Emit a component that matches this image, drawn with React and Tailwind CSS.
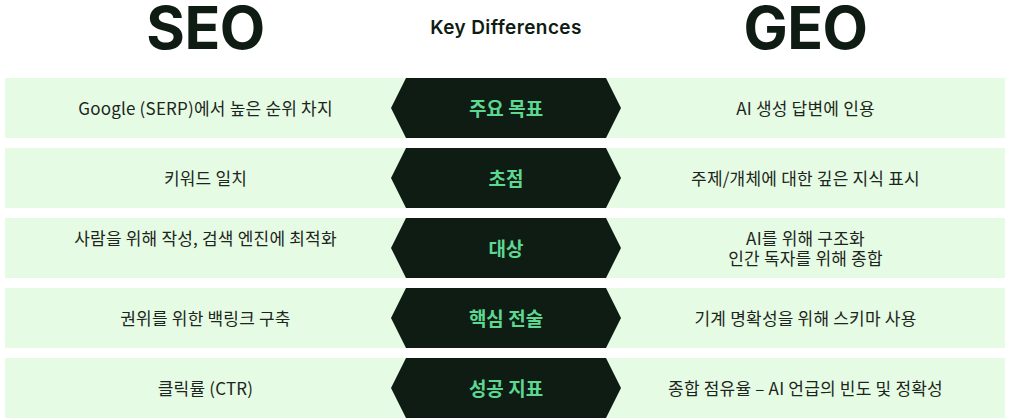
import React from "react";

const rows = [
  { seo: ["Google (SERP)에서 높은 순위 차지"], key: "주요 목표", geo: ["AI 생성 답변에 인용"] },
  { seo: ["키워드 일치"], key: "초점", geo: ["주제/개체에 대한 깊은 지식 표시"] },
  { seo: ["사람을 위해 작성, 검색 엔진에 최적화", "\u00a0"], key: "대상", geo: ["AI를 위해 구조화", "인간 독자를 위해 종합"] },
  { seo: ["권위를 위한 백링크 구축"], key: "핵심 전술", geo: ["기계 명확성을 위해 스키마 사용"] },
  { seo: ["클릭률 (CTR)"], key: "성공 지표", geo: ["종합 점유율 – AI 언급의 빈도 및 정확성"] },
];

export default function App() {
  return (
    <div className="w-[1009px] h-[419px] bg-white pl-[5px] pr-[4px] overflow-hidden">
      <div className="flex h-[78px] text-[#0f1c14]">
        <div className="w-[401px] flex justify-center pt-[2px]">
          <div className="text-[59px] leading-[60px] font-bold tracking-[-0.5px] -mt-[4px] [font-family:Inter,'Liberation_Sans',sans-serif]">SEO</div>
        </div>
        <div className="w-[200px] flex justify-center">
          <div className="text-[19px] leading-[22px] font-semibold mt-[17px] tracking-[0.4px] whitespace-nowrap [font-family:Inter,'Liberation_Sans',sans-serif]">Key Differences</div>
        </div>
        <div className="flex-1 flex justify-center pt-[2px]">
          <div className="text-[59px] leading-[60px] font-bold tracking-[-0.5px] -mt-[4px] [font-family:Inter,'Liberation_Sans',sans-serif]">GEO</div>
        </div>
      </div>
      <div className="flex flex-col gap-[10px]">
        {rows.map((r, i) => (
          <div key={i} className="flex h-[60px] bg-[#e6fbe4]">
            <div className="w-[401px] flex flex-col items-center justify-center text-[17px] leading-[20px] tracking-[0.2px] text-[#1c2620] [font-family:'Noto_Sans_CJK_KR',sans-serif]">
              {r.seo.map((t, j) => (
                <div key={j}>{t}</div>
              ))}
            </div>
            <div className="relative z-10 w-[230px] -mx-[15px] shrink-0 bg-[#0f1c14] [clip-path:polygon(15px_0,215px_0,100%_50%,215px_100%,15px_100%,0_50%)] flex items-center justify-center">
              <span className="text-[19px] font-bold text-[#5cd891] [font-family:'Noto_Sans_CJK_KR',sans-serif]">{r.key}</span>
            </div>
            <div className="flex-1 flex flex-col items-center justify-center text-[17px] leading-[20px] tracking-[0.2px] text-[#1c2620] [font-family:'Noto_Sans_CJK_KR',sans-serif]">
              {r.geo.map((t, j) => (
                <div key={j}>{t}</div>
              ))}
            </div>
          </div>
        ))}
      </div>
    </div>
  );
}
